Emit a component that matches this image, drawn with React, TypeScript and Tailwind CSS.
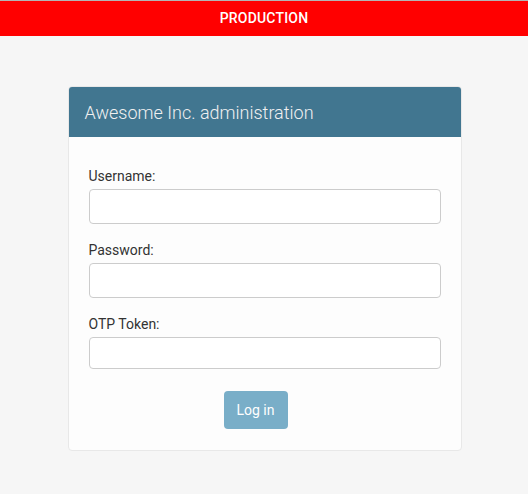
import React from "react";

export default function App() {
  const label = "pt-[1px] text-[14px] leading-[20px] text-[#333]";
  const input = "mt-[3px] w-full border border-[#cccccc] rounded-[4px] bg-white outline-none";
  return (
    <div
      className="min-h-[494px] w-full bg-[#f6f6f6] flex flex-col"
      style={{ fontFamily: "Roboto, 'Liberation Sans', sans-serif" }}
    >
      <div className="h-px bg-[#b4b4b4]" />
      <div className="h-[35px] bg-[#ff0000] flex items-center justify-center">
        <span className="text-white text-[14px] font-medium tracking-[0.2px]">PRODUCTION</span>
      </div>
      <div className="flex justify-center pt-[50px] pl-px">
        <div className="w-[394px] border border-[#e8e8e8] rounded-[4px] bg-[#fdfdfd] overflow-hidden">
          <div className="h-[50px] bg-[#417690] flex items-center px-4">
            <h1 className="text-[18px] font-light text-[#f0f0f0]">Awesome Inc. administration</h1>
          </div>
          <div className="px-5 pt-[28px] pb-[21px] flex flex-col">
            <label className={label}>Username:</label>
            <input type="text" className={`${input} h-[35px]`} />
            <label className={`mt-[15px] ${label}`}>Password:</label>
            <input type="password" className={`${input} h-[35px]`} />
            <label className={`mt-[15px] ${label}`}>OTP Token:</label>
            <input type="text" className={`${input} h-[32px]`} />
            <div className="flex mt-[22px] pl-[135px]">
              <button className="w-[64px] h-[38px] rounded-[4px] bg-[#79aec8] text-white text-[14px]">
                Log in
              </button>
            </div>
          </div>
        </div>
      </div>
    </div>
  );
}
